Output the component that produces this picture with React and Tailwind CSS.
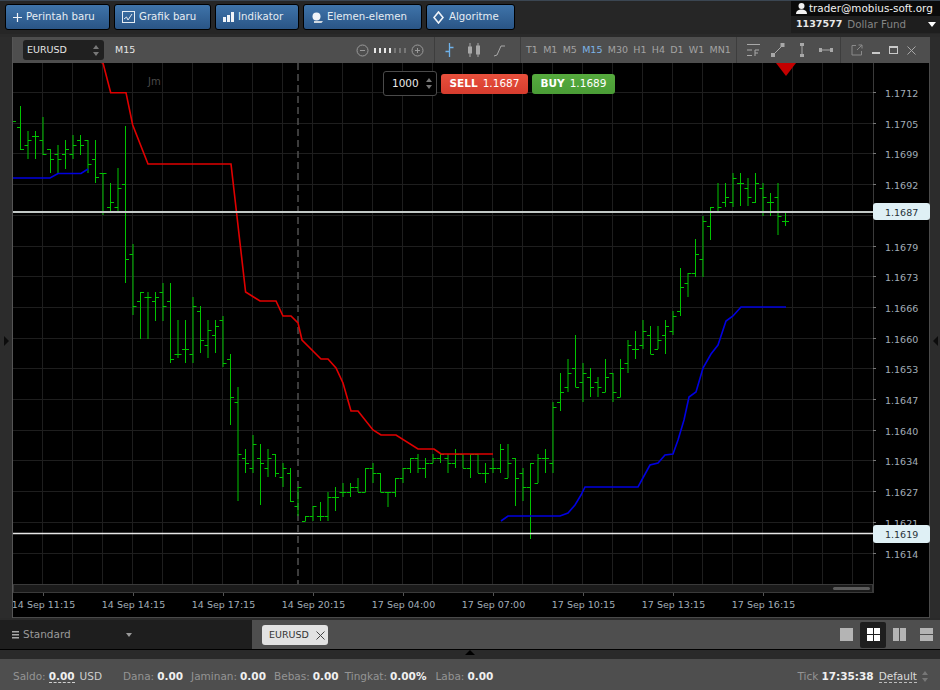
// [high, low, open tick, close tick], 7.5px apart starting at x=20.5
const BARS = [
  [106,150,127,149],[131,159,145,140],[131,159,136,136],[117,155,140,154],[149,173,149,159],[145,173,154,159],
  [140,169,154,149],[135,159,154,145],[135,155,140,145],[140,173,140,164],[140,183,159,177],[173,215,173,173],
  [183,212,207,202],[168,212,207,188],[126,283,184,259],[244,315,254,306],[292,339,301,292],[292,339,297,297],
  [292,321,301,297],[283,321,292,306],[283,363,301,359],[320,358,354,354],[320,363,349,349],[297,363,354,306],
  [306,353,311,340],[320,358,345,330],[320,353,335,326],[316,367,320,363],[354,425,359,397],[387,501,402,454],
  [449,473,458,463],[435,473,468,444],[444,505,458,463],[449,477,468,458],[454,477,454,473],[463,487,477,468],
  [468,502,473,501],[487,516,506,487],[516,521,521,516],[506,521,516,506],[502,521,516,516],[492,521,516,497],
  [487,511,497,497],[483,497,492,492],[483,497,492,487],[478,492,487,492],[468,492,492,468],[463,483,468,473],
  [473,492,473,492],[492,507,492,492],[478,497,492,478],[468,483,478,468],[458,473,468,458],[454,473,458,468],
  [458,478,468,463],[454,463,463,458],[454,463,458,454],[454,473,458,463],[449,468,463,454],[454,468,454,468],
  [454,478,468,454],[454,473,454,473],[463,483,473,473],[458,473,468,468],[444,473,468,449],[444,478,478,463],
  [458,506,458,478],[468,501,473,487],[463,539,487,463],[454,483,483,458],[449,473,458,458],[402,473,463,407],
  [373,411,402,392],[359,392,387,373],[335,387,368,387],[363,402,382,373],[368,397,377,387],[377,397,382,387],
  [359,392,392,377],[373,402,373,392],[359,397,397,368],[340,373,363,345],[331,359,349,349],[320,349,345,331],
  [326,354,335,354],[326,349,349,340],[320,354,335,326],[311,335,331,316],[268,316,311,287],[273,297,283,273],
  [239,277,273,254],[216,277,259,221],[207,240,226,207],[183,212,212,207],[183,207,202,197],[173,207,202,178],
  [173,206,183,183],[178,206,188,197],[173,203,202,183],[183,216,188,197],[193,216,202,202],[183,235,197,216],
  [212,226,221,221],
]

const RED = '100,62 103,63 110.7,92.7 126,92.7 132.7,125 148,164 231,164 245.6,292 260,301 276,301 283,316 291,316 298,323 302,340 321,359 328,359 336,368 343,383 351,411 358,411 373,430 381,435 396,435 418,449 434,449 441,454 493,454'
const BLUE_A = '13,178 50,178 58,173.5 81,173.5 88,169'
const BLUE_B = '501,521 508,516 560,516 568,513 575,505 581,495 585,487 638,487 650,465 658,463 665,455 673,454 678,440 684,420 689,397 696,392 703,368 711,354 718,345 726,321 733,316 741,307 786,307'

const PRICES = ['1.1712','1.1705','1.1699','1.1692',null,'1.1679','1.1673','1.1666','1.1660','1.1653','1.1647','1.1640','1.1634','1.1627','1.1621','1.1614']
const TIMES = ['14 Sep 11:15','14 Sep 14:15','14 Sep 17:15','14 Sep 20:15','17 Sep 04:00','17 Sep 07:00','17 Sep 10:15','17 Sep 13:15','17 Sep 16:15']
const FRAMES = ['T1','M1','M5','M15','M30','H1','H4','D1','W1','MN1']

function Chart() {
  const vLines = []
  for (let x = 42.5; x < 873; x += 30) vLines.push(x)
  return (
    <svg viewBox="13 63 917 555" className="w-[917px] h-[555px] block">
      <rect x="13" y="63" width="917" height="555" fill="#000" />
      <g stroke="#1e1e1e" strokeWidth="1">
        {vLines.map(x => <line key={x} x1={x} x2={x} y1="63" y2="584" />)}
        {PRICES.map((p, k) => {
          const y = Math.round(92 + 30.7 * k) + 0.5
          return <line key={k} x1="13" x2="873" y1={y} y2={y} />
        })}
      </g>
      <line x1="298" x2="298" y1="63" y2="584" stroke="#505050" strokeWidth="1.5" strokeDasharray="7 4" />

      {/* bars */}
      <line x1="13" x2="16" y1="121.5" y2="121.5" stroke="#00b400" />
      {BARS.map(([hi, lo, open, close], i) => {
        const x = 20.5 + 7.5 * i
        return (
          <g key={i} stroke="#00c400" strokeWidth="1">
            <line x1={x} x2={x} y1={hi} y2={lo} />
            <line x1={x - 3.5} x2={x} y1={open + 0.5} y2={open + 0.5} />
            <line x1={x} x2={x + 3.5} y1={close + 0.5} y2={close + 0.5} />
          </g>
        )
      })}

      <polyline points={RED} fill="none" stroke="#e00000" strokeWidth="1.6" />
      <polyline points={BLUE_A} fill="none" stroke="#0000e0" strokeWidth="1.6" />
      <polyline points={BLUE_B} fill="none" stroke="#0000e0" strokeWidth="1.6" />
      <polygon points="776,63 796,63 786,76" fill="#c40000" />

      <text x="148" y="85" fill="#4a4a4a" fontSize="10" className="font-['DejaVu_Sans']">Jm</text>

      {/* scrollbar strip */}
      <rect x="13.5" y="584.5" width="859" height="8" fill="#1b1b1b" stroke="#3a3a3a" />
      <rect x="833" y="587" width="37" height="3" rx="1.5" fill="#5c5c5c" />
      <line x1="873.5" x2="873.5" y1="63" y2="593" stroke="#3a3a3a" />
      <line x1="929.5" x2="929.5" y1="63" y2="618" stroke="#4a4a4a" />
      <line x1="13" x2="930" y1="617.5" y2="617.5" stroke="#4a4a4a" />

      {/* axes */}
      <g className="font-['DejaVu_Sans']" fontSize="9.5" fill="#a2aeb8">
        {PRICES.map((p, k) => {
          if (!p) return null
          const y = Math.round(92 + 30.7 * k) + 0.5
          return (
            <g key={p}>
              <line x1="873" x2="876" y1={y} y2={y} stroke="#777" />
              <text x="885" y={y + 4.5}>{p}</text>
            </g>
          )
        })}
        {TIMES.map((t, k) => (
          <g key={t}>
            <line x1={43.5 + 90 * k} x2={43.5 + 90 * k} y1="593" y2="596" stroke="#555" />
            <text x={43.5 + 90 * k} y="608" textAnchor="middle">{t}</text>
          </g>
        ))}
      </g>

      {/* current price lines */}
      <line x1="13" x2="873" y1="212" y2="212" stroke="#c2c8c6" strokeWidth="2" />
      <line x1="13" x2="873" y1="533.5" y2="533.5" stroke="#e6e6e6" strokeWidth="1.4" />
      <g className="font-['DejaVu_Sans']" fontSize="9.5" fill="#26323a">
        <rect x="873" y="203" width="57" height="17" rx="3" fill="#dff0f5" />
        <text x="885" y="215.5">1.1687</text>
        <rect x="873" y="525" width="57" height="18" rx="3" fill="#dff0f5" />
        <text x="885" y="538">1.1619</text>
      </g>
    </svg>
  )
}

function TopButton({ icon, label, className }) {
  return (
    <button className={`h-[26px] flex items-center rounded-[3px] border border-black bg-gradient-to-b from-[#3f74aa] to-[#2a5586] text-[#e6edf3] text-[10.2px] ${className}`}>
      {icon}
      {label}
    </button>
  )
}

const PlusIcon = (
  <svg width="9" height="9" viewBox="0 0 9 9" stroke="#f0f4f8" strokeWidth="1.2"><path d="M4.5 0V9M0 4.5H9" /></svg>
)
const GraphIcon = (
  <svg width="13" height="12" viewBox="0 0 13 12" fill="none" stroke="#e6edf3">
    <rect x="0.5" y="0.5" width="12" height="11" />
    <path d="M2 8 L4.5 6 L6 9 L10 3" />
  </svg>
)
const BarsIcon = (
  <svg width="11" height="10" viewBox="0 0 11 10" fill="#f0f4f8">
    <rect x="0" y="5" width="3" height="5" />
    <rect x="4" y="3" width="3" height="7" />
    <rect x="8" y="0" width="3" height="10" />
  </svg>
)
const ShapesIcon = (
  <svg width="11" height="11" viewBox="0 0 11 11" fill="#f0f4f8">
    <circle cx="4.5" cy="4.5" r="4" />
    <path d="M2 9 H11 L9.5 11 H2 Z" fill="#cfd8e0" />
  </svg>
)
const DiamondIcon = (
  <svg width="11" height="13" viewBox="0 0 11 13" fill="none" stroke="#f0f4f8" strokeWidth="1.6">
    <path d="M5.5 1 L10 6.5 L5.5 12 L1 6.5 Z" />
  </svg>
)
const CloseIcon = ({ color }) => (
  <svg width="9" height="9" viewBox="0 0 9 9" fill="none" stroke={color}><path d="M0.5 0.5L8.5 8.5M8.5 0.5L0.5 8.5" /></svg>
)

function Updown({ className = '' }) {
  return (
    <svg width="6" height="11" viewBox="0 0 6 11" fill="#777" className={className}>
      <path d="M3 0 L6 4 H0 Z M3 11 L0 7 H6 Z" />
    </svg>
  )
}

function ChartHeader() {
  return (
    <div className="h-[26px] bg-[#4e4e4e] flex items-center text-[9.5px] text-[#a3a3a3] shrink-0">
      <div className="ml-[10px] w-[81px] h-[20px] rounded-[3px] bg-[#202020] flex items-center justify-between pl-[4px] pr-[5px] text-[#e6e6e6]">
        EURUSD <Updown />
      </div>
      <span className="ml-[11px] text-[#e6e6e6] w-[43px]">M15</span>

      {/* zoom */}
      <div className="ml-[198px] w-[70px] flex items-center gap-[5px] h-full">
        <svg width="13" height="13" viewBox="0 0 13 13" fill="none" stroke="#9a9a9a"><circle cx="6.5" cy="6.5" r="5.5" /><path d="M4 6.5H9" /></svg>
        <div className="flex gap-[3px] items-center">
          {[1, 1, 1, 1, 0, 0, 0].map((on, i) => (
            <span key={i} className={on ? 'w-[2px] h-[5px] bg-[#e6e6e6]' : 'w-[2px] h-[5px] bg-[#777]'} />
          ))}
        </div>
        <svg width="13" height="13" viewBox="0 0 13 13" fill="none" stroke="#9a9a9a"><circle cx="6.5" cy="6.5" r="5.5" /><path d="M4 6.5H9M6.5 4V9" /></svg>
      </div>

      {/* chart type */}
      <div className="h-full ml-[8px] w-[86px] border-l border-[#3d3d3d] flex items-center pl-[9px] gap-[12px]">
        <svg width="11" height="16" viewBox="0 0 11 16" fill="none" stroke="#6fb2ea" strokeWidth="1.3"><path d="M5.5 1V15M1.5 9.5H5.5M5.5 5.5H9.5" /></svg>
        <svg width="14" height="14" viewBox="0 0 14 14" stroke="#a8a8a8" fill="#a8a8a8"><path d="M3 0V14M11 0V14" /><rect x="1.5" y="4" width="3" height="6" /><rect x="9.5" y="3" width="3" height="8" /></svg>
        <svg width="13" height="13" viewBox="0 0 13 13" fill="none" stroke="#a8a8a8"><path d="M1 12 L4 11 L8 2 L12 2" /></svg>
      </div>

      {/* timeframes */}
      <div className="h-full w-[217px] border-l border-r border-[#3d3d3d] flex items-center justify-between pl-[5px] pr-[5px]">
        {FRAMES.map(f => <span key={f} className={f === 'M15' ? 'text-[#7db4e6]' : ''}>{f}</span>)}
      </div>

      {/* drawing tools */}
      <div className="h-full w-[103px] flex items-center pl-[9px] gap-[10px]">
        <svg width="15" height="14" viewBox="0 0 15 14" fill="none" stroke="#a8a8a8"><path d="M1 1.5H14M1 7H6M1 12.5H6" /><path d="M9 13V7H13M9 10H12" /></svg>
        <svg width="14" height="14" viewBox="0 0 14 14" fill="#a8a8a8" stroke="#a8a8a8"><path d="M2 12L12 2" /><rect x="10" y="0.5" width="3" height="3" /><rect x="0.5" y="10.5" width="3" height="3" /></svg>
        <svg width="14" height="14" viewBox="0 0 14 14" fill="#a8a8a8" stroke="#a8a8a8"><path d="M7 2V12" /><rect x="5.5" y="0.5" width="3" height="2" /><rect x="5.5" y="11.5" width="3" height="2" /></svg>
        <svg width="14" height="14" viewBox="0 0 14 14" fill="#a8a8a8" stroke="#a8a8a8"><path d="M2 7H12" /><rect x="0.5" y="5.5" width="2" height="3" /><rect x="11.5" y="5.5" width="2" height="3" /></svg>
      </div>

      {/* window controls */}
      <div className="h-full flex-1 border-l border-[#3d3d3d] flex items-center pl-[10px] gap-[9px]">
        <svg width="12" height="12" viewBox="0 0 12 12" fill="none" stroke="#8a8a8a"><path d="M5 1.5H1V11H10.5V7" /><path d="M6 6L11 1M7.5 1H11V4.5" /></svg>
        <span className="w-[8px] h-[2px] bg-[#c9c9c9] mt-[5px]" />
        <span className="w-[9px] h-[8px] border border-t-[2px] border-[#c9c9c9]" />
        <CloseIcon color="#a8a8a8" />
      </div>
    </div>
  )
}

function Value({ children, dashed }) {
  return (
    <b className={`text-[#f0f0f0] font-bold ml-[3px] ${dashed ? 'border-b border-dashed border-[#d0d0d0] leading-[12px]' : ''}`}>{children}</b>
  )
}

function LayoutIcons() {
  return (
    <div className="ml-auto flex items-center h-full pr-[7px]">
      <span className="w-[13px] h-[13px] bg-[#b4b4b4] mr-[7px]" />
      <span className="w-[26px] h-[26px] bg-[#1e1e1e] rounded-[2px] grid grid-cols-2 gap-[1px] p-[6.5px] mr-[7px]">
        {[0, 1, 2, 3].map(i => <i key={i} className="bg-white" />)}
      </span>
      <span className="w-[13px] h-[13px] grid grid-cols-2 gap-[1px] mr-[14px]">
        <i className="bg-[#b4b4b4]" /><i className="bg-[#b4b4b4]" />
      </span>
      <span className="w-[13px] h-[13px] grid grid-rows-2 gap-[1px]">
        <i className="bg-[#b4b4b4]" /><i className="bg-[#b4b4b4]" />
      </span>
    </div>
  )
}

export default function App() {
  return (
    <div className="w-[940px] h-[690px] overflow-hidden flex flex-col bg-[#2a2a2a] font-['DejaVu_Sans',sans-serif]">
      {/* top toolbar */}
      <div className="h-[34px] shrink-0 bg-[#262626] border-t border-[#3b4652] flex items-start">
        <div className="flex gap-[4px] pl-[5px] pt-[3px]">
          <TopButton className="w-[105px] pl-[7px] gap-[4px]" icon={PlusIcon} label="Perintah baru" />
          <TopButton className="w-[97px] pl-[7px] gap-[4px]" icon={GraphIcon} label="Grafik baru" />
          <TopButton className="w-[84px] pl-[7px] gap-[4px]" icon={BarsIcon} label="Indikator" />
          <TopButton className="w-[119px] pl-[8px] gap-[4px]" icon={ShapesIcon} label="Elemen-elemen" />
          <TopButton className="w-[89px] pl-[6px] gap-[5px]" icon={DiamondIcon} label="Algoritme" />
        </div>
        <div className="ml-auto w-[149px] h-[32px] bg-[#0a0a0a]">
          <div className="h-[15px] flex items-center pl-[5px] gap-[2px] text-[#f2f2f2] text-[10.4px] whitespace-nowrap">
            <svg width="11" height="11" viewBox="0 0 11 11" fill="#f2f2f2" className="shrink-0"><circle cx="5.5" cy="3" r="3" /><path d="M0 11C0 7.5 3 6.5 5.5 6.5S11 7.5 11 11Z" /></svg>
            trader@mobius-soft.org
          </div>
          <div className="h-[17px] bg-[#1e1e1e] flex items-center pl-[5px] gap-[5px] text-[10.3px]">
            <b className="text-[#e8e8e8] text-[9.5px]">1137577</b>
            <span className="text-[#858585]">Dollar Fund</span>
            <span className="ml-auto mr-[4px] w-0 h-0 border-x-[4px] border-x-transparent border-t-[5px] border-t-white" />
          </div>
        </div>
      </div>

      {/* chart window */}
      <div className="flex h-[584px] shrink-0 pt-[3px]">
        <div className="w-[13px] bg-[#2c2c2c] border-r border-[#555] flex items-center pt-[26px] pl-[4px]">
          <span className="w-0 h-0 border-y-[5px] border-y-transparent border-l-[5px] border-l-[#0c0c0c]" />
        </div>
        <div className="w-[917px] flex flex-col relative">
          <ChartHeader />
          <Chart />
          {/* quick order */}
          <div className="absolute left-[370px] top-[34px] flex items-center gap-[4px] text-[10.5px] font-bold">
            <div className="w-[54px] h-[25px] rounded-[3px] border border-[#4a4a4a] bg-black flex items-center justify-between pl-[8px] pr-[4px] text-[#e8e8e8] font-normal">
              1000 <Updown />
            </div>
            <button className="w-[87px] h-[20px] rounded-[3px] bg-gradient-to-b from-[#e8503c] to-[#d63c2e] text-white flex items-center justify-center gap-[5px]">
              SELL <span className="font-normal">1.1687</span>
            </button>
            <button className="w-[83px] h-[20px] rounded-[3px] bg-gradient-to-b from-[#56ab3e] to-[#4a9c36] text-white flex items-center justify-center gap-[5px]">
              BUY <span className="font-normal">1.1689</span>
            </button>
          </div>
        </div>
        <div className="flex-1 bg-[#2c2c2c] flex items-center justify-end pt-[26px] pr-[2px]">
          <span className="w-0 h-0 border-y-[5px] border-y-transparent border-r-[5px] border-r-[#0c0c0c]" />
        </div>
      </div>

      {/* workspace tabs */}
      <div className="h-[29px] shrink-0 flex mt-[2px] bg-[#4e4e4e]">
        <div className="w-[252px] h-full bg-[#1e1e1e] flex items-center pl-[12px] text-[#9a9a9a] gap-[4px] text-[10.5px]">
          <svg width="7" height="8" viewBox="0 0 7 8" fill="#a8a8a8"><path d="M0 0H7V1.5H0ZM0 3H7V4.5H0ZM0 6H7V7.5H0Z" /></svg>
          Standard
          <span className="ml-[51px] w-0 h-0 border-x-[3px] border-x-transparent border-t-[4px] border-t-[#999]" />
        </div>
        <div className="ml-[10px] mt-[5px] w-[66px] h-[20px] rounded-[3px] bg-[#e2e2e2] flex items-center pl-[7px] gap-[7px] text-[9.5px] text-[#333]">
          EURUSD <CloseIcon color="#444" />
        </div>
        <LayoutIcons />
      </div>

      <div className="h-[10px] shrink-0 bg-[#2a2a2a] border-t border-black flex justify-center">
        <span className="w-0 h-0 border-x-[5px] border-x-transparent border-b-[5px] border-b-black" />
      </div>

      {/* status bar */}
      <div className="flex-1 bg-[#4e4e4e] flex items-center pt-[4px] pl-[13px] pr-[12px] text-[10.5px] text-[#949494]">
        <span>Saldo:</span><Value dashed>0.00</Value><span className="ml-[5px] text-[#cfcfcf]">USD</span>
        <span className="ml-[21px]">Dana:</span><Value>0.00</Value>
        <span className="ml-[8px]">Jaminan:</span><Value>0.00</Value>
        <span className="ml-[8px]">Bebas:</span><Value>0.00</Value>
        <span className="ml-[6px]">Tingkat:</span><Value>0.00%</Value>
        <span className="ml-[9px]">Laba:</span><Value>0.00</Value>
        <span className="ml-auto">Tick</span><Value>17:35:38</Value>
        <span className="ml-[5px] text-[#dcdcdc] border-b border-dashed border-[#bbb] leading-[12px]">Default</span>
        <Updown className="ml-[5px]" />
      </div>
    </div>
  )
}
